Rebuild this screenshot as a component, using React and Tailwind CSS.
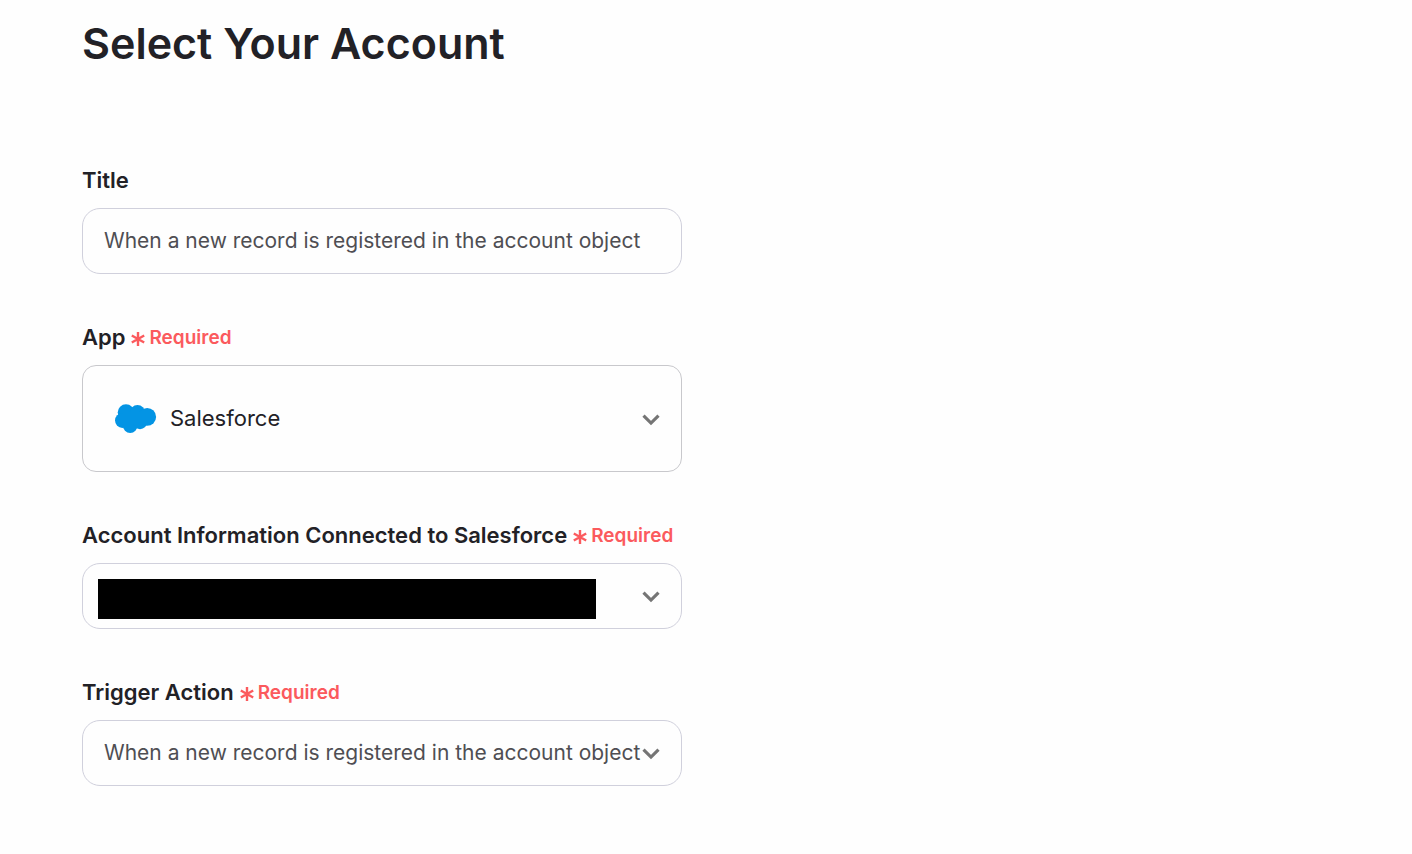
import React, { useState } from 'react';

const RECORD_TRIGGER = 'When a new record is registered in the account object';

function Chevron() {
  return (
    <svg
      className="pointer-events-none mr-[22px] h-[18px] w-[18px] justify-self-end"
      viewBox="0 0 18 18"
      fill="none"
      stroke="#757575"
      strokeWidth="3.2"
      aria-hidden="true"
    >
      <path d="M1.5 5.7 9 13.1l7.5-7.4" />
    </svg>
  );
}

function SalesforceLogo() {
  return (
    <svg className="pointer-events-none ml-[33px] h-[30px] w-[42px]" viewBox="0 0 42 30" fill="#0394e4" aria-hidden="true">
      <circle cx="11" cy="8.5" r="8.3" />
      <circle cx="22.5" cy="8.6" r="7.6" />
      <circle cx="32.2" cy="12.9" r="8.9" />
      <circle cx="7.4" cy="16.6" r="7.4" />
      <circle cx="15.2" cy="21.5" r="7.4" />
      <circle cx="25" cy="18" r="7.2" />
      <path d="M8 8h24v12H8z" />
    </svg>
  );
}

function Required() {
  return (
    <span className="flex items-center gap-1 pt-0.5 text-[19px] leading-7 font-semibold text-[#fb5a5d]">
      <svg className="mt-0.5 h-[14px] w-[14px]" viewBox="0 0 14 14" stroke="currentColor" strokeWidth="2.4" aria-hidden="true">
        <path d="M7 0v14M.8 3.5l12.4 7M.8 10.5l12.4-7" />
      </svg>
      Required
    </span>
  );
}

// The control and its icons share one grid cell, so the icons lie over the control
function Field({ id, label, required, children }) {
  return (
    <div className="flex flex-col gap-[13px]">
      <label htmlFor={id} className="flex items-center gap-1.5 whitespace-nowrap text-[22px] leading-[30px] font-semibold text-[#222126]">
        {label}
        {required && <Required />}
      </label>
      <div className="grid items-center *:col-start-1 *:row-start-1">{children}</div>
    </div>
  );
}

export default function App() {
  const [title, setTitle] = useState(RECORD_TRIGGER);

  return (
    <main className="flex min-h-screen flex-col gap-[95px] bg-[#fefefe] px-5 pt-4 pb-16 font-['Inter',sans-serif] sm:px-[82px]">
      <h1 className="text-[43px] leading-[54px] font-semibold text-[#222126]">Select Your Account</h1>

      <form className="flex w-full max-w-[600px] flex-col gap-12">
        <Field id="title" label="Title">
          <input
            id="title"
            type="text"
            value={title}
            onChange={(e) => setTitle(e.target.value)}
            className="w-full rounded-[18px] border border-[#d0d0dc] bg-[#fefefe] px-[21px] py-4 text-[21px] leading-8 text-[#4f4e53]"
          />
        </Field>

        <Field id="app" label="App" required>
          <select
            id="app"
            className="h-[107px] w-full appearance-none rounded-[14px] border border-[#c8c8cc] bg-[#fefefe] pr-12 pl-[87px] text-[22px] text-[#222126]"
          >
            <option>Salesforce</option>
          </select>
          <SalesforceLogo />
          <Chevron />
        </Field>

        <Field id="account" label="Account Information Connected to Salesforce" required>
          <select
            id="account"
            className="h-[66px] w-full appearance-none rounded-[18px] border border-[#d0d0dc] bg-[#fefefe] px-[21px] text-[21px]"
          >
            <option value="connected"></option>
          </select>
          <span className="pointer-events-none mt-1.5 mr-[86px] ml-4 h-10 bg-black" />
          <Chevron />
        </Field>

        <Field id="trigger" label="Trigger Action" required>
          <select
            id="trigger"
            className="h-[66px] w-full appearance-none rounded-[18px] border border-[#d0d0dc] bg-[#fefefe] pr-9 pl-[21px] text-[21px] text-[#4f4e53]"
          >
            <option>{RECORD_TRIGGER}</option>
          </select>
          <Chevron />
        </Field>
      </form>
    </main>
  );
}
